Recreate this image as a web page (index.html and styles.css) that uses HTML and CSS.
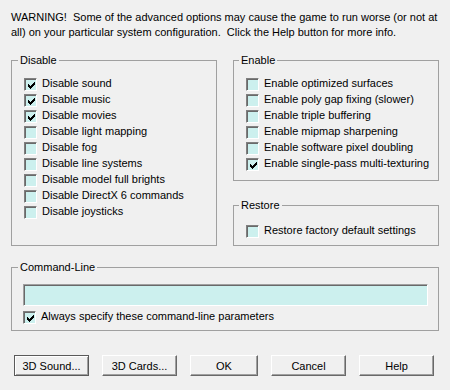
FILE: index.html
```html
<!DOCTYPE html>
<html>
<head>
<meta charset="utf-8">
<link rel="stylesheet" href="styles.css">
</head>
<body>
<div class="dlg">
  <p class="warn">WARNING!&nbsp; Some of the advanced options may cause the game to run worse (or not at<br>all) on your particular system configuration.&nbsp; Click the Help button for more info.</p>
  <div class="groups">
    <fieldset class="grp disable">
      <legend>Disable</legend>
      <label class="cb"><span class="box"><svg viewBox="0 0 7 7" width="7" height="7"><path d="M0 2h1v3H0zM1 3h1v3H1zM2 4h1v3H2zM3 3h1v3H3zM4 2h1v3H4zM5 1h1v3H5zM6 0h1v3H6z"/></svg></span><span class="txt">Disable sound</span></label>
      <label class="cb"><span class="box"><svg viewBox="0 0 7 7" width="7" height="7"><path d="M0 2h1v3H0zM1 3h1v3H1zM2 4h1v3H2zM3 3h1v3H3zM4 2h1v3H4zM5 1h1v3H5zM6 0h1v3H6z"/></svg></span><span class="txt">Disable music</span></label>
      <label class="cb"><span class="box"><svg viewBox="0 0 7 7" width="7" height="7"><path d="M0 2h1v3H0zM1 3h1v3H1zM2 4h1v3H2zM3 3h1v3H3zM4 2h1v3H4zM5 1h1v3H5zM6 0h1v3H6z"/></svg></span><span class="txt">Disable movies</span></label>
      <label class="cb"><span class="box"></span><span class="txt">Disable light mapping</span></label>
      <label class="cb"><span class="box"></span><span class="txt">Disable fog</span></label>
      <label class="cb"><span class="box"></span><span class="txt">Disable line systems</span></label>
      <label class="cb"><span class="box"></span><span class="txt">Disable model full brights</span></label>
      <label class="cb"><span class="box"></span><span class="txt">Disable DirectX 6 commands</span></label>
      <label class="cb"><span class="box"></span><span class="txt">Disable joysticks</span></label>
    </fieldset>
    <div class="rcol">
      <fieldset class="grp enable">
        <legend>Enable</legend>
        <label class="cb"><span class="box"></span><span class="txt">Enable optimized surfaces</span></label>
        <label class="cb"><span class="box"></span><span class="txt">Enable poly gap fixing (slower)</span></label>
        <label class="cb"><span class="box"></span><span class="txt">Enable triple buffering</span></label>
        <label class="cb"><span class="box"></span><span class="txt">Enable mipmap sharpening</span></label>
        <label class="cb"><span class="box"></span><span class="txt">Enable software pixel doubling</span></label>
        <label class="cb"><span class="box"><svg viewBox="0 0 7 7" width="7" height="7"><path d="M0 2h1v3H0zM1 3h1v3H1zM2 4h1v3H2zM3 3h1v3H3zM4 2h1v3H4zM5 1h1v3H5zM6 0h1v3H6z"/></svg></span><span class="txt">Enable single-pass multi-texturing</span></label>
      </fieldset>
      <fieldset class="grp restore">
        <legend>Restore</legend>
        <label class="cb"><span class="box"></span><span class="txt">Restore factory default settings</span></label>
      </fieldset>
    </div>
  </div>
  <fieldset class="grp cmd">
    <legend>Command-Line</legend>
    <div class="input"></div>
    <label class="cb"><span class="box"><svg viewBox="0 0 7 7" width="7" height="7"><path d="M0 2h1v3H0zM1 3h1v3H1zM2 4h1v3H2zM3 3h1v3H3zM4 2h1v3H4zM5 1h1v3H5zM6 0h1v3H6z"/></svg></span><span class="txt">Always specify these command-line parameters</span></label>
  </fieldset>
  <div class="buttons">
    <button class="btn default">3D Sound...</button>
    <button class="btn">3D Cards...</button>
    <button class="btn ok">OK</button>
    <button class="btn">Cancel</button>
    <button class="btn">Help</button>
  </div>
</div>
</body>
</html>
```
FILE: styles.css
```css
html, body {
  margin: 0;
  background: #f0f0f0;
}
body {
  font-family: "Liberation Sans", Arial, sans-serif;
  font-size: 11px;
  color: #000;
}
.dlg {
  width: 428px;
  padding: 10px 11px 0 11px;
}
.warn {
  margin: 0;
  line-height: 15px;
  white-space: nowrap;
}
.groups {
  display: grid;
  grid-template-columns: 206px 206px;
  column-gap: 16px;
  margin-top: 14px;
}
.rcol {
  display: flex;
  flex-direction: column;
  gap: 18px;
}
.grp {
  margin: 0;
  min-width: 0;
  border: 1px solid #a0a0a0;
  padding: 10px 11px 0 12px;
}
.grp legend {
  margin-left: -7px;
  padding: 0 2px;
  line-height: 13px;
}
.disable legend { margin-left: -6px; }
.enable { padding-bottom: 7px; }
.restore { padding-top: 12px; padding-bottom: 5px; }
.cmd {
  margin-top: 15px;
  padding: 10px 9px 4px 11px;
}
.cmd legend { margin-left: -5px; }
.cb {
  display: flex;
  align-items: flex-start;
  height: 16px;
}
.box {
  box-sizing: border-box;
  width: 13px;
  height: 13px;
  margin-top: 1px;
  margin-right: 5px;
  flex: none;
  background: #ccf0ee;
  border-style: solid;
  border-width: 1px;
  border-color: #808080 #ffffff #ffffff #808080;
  box-shadow: inset 1px 1px 0 #696969;
  display: flex;
  align-items: center;
  justify-content: center;
}
.box svg {
  display: block;
  fill: #000;
  shape-rendering: crispEdges;
  margin: 1px 0 0 1px;
}
.txt {
  line-height: 13px;
  white-space: nowrap;
}
.input {
  box-sizing: border-box;
  width: 405px;
  height: 22px;
  background: #ccf0ee;
  border-style: solid;
  border-width: 1px;
  border-color: #a0a0a0 #ffffff #ffffff #a0a0a0;
  box-shadow: inset 1px 1px 0 #696969;
  margin-bottom: 4px;
}
.buttons {
  display: flex;
  gap: 13px;
  margin-top: 24px;
  margin-left: 3px;
}
.btn {
  box-sizing: border-box;
  width: 75px;
  height: 21px;
  padding: 0;
  margin: 0;
  font: inherit;
  color: #000;
  background: #f0f0f0;
  border-style: solid;
  border-width: 1px;
  border-color: #ffffff #696969 #696969 #ffffff;
  box-shadow: inset -1px -1px 0 #a0a0a0;
  border-radius: 0;
}
.btn.ok { width: 68px; }
.btn.default {
  border-color: #5a5a5a;
  box-shadow: inset 1px 1px 0 #ffffff, inset -1px -1px 0 #a0a0a0;
}
```
